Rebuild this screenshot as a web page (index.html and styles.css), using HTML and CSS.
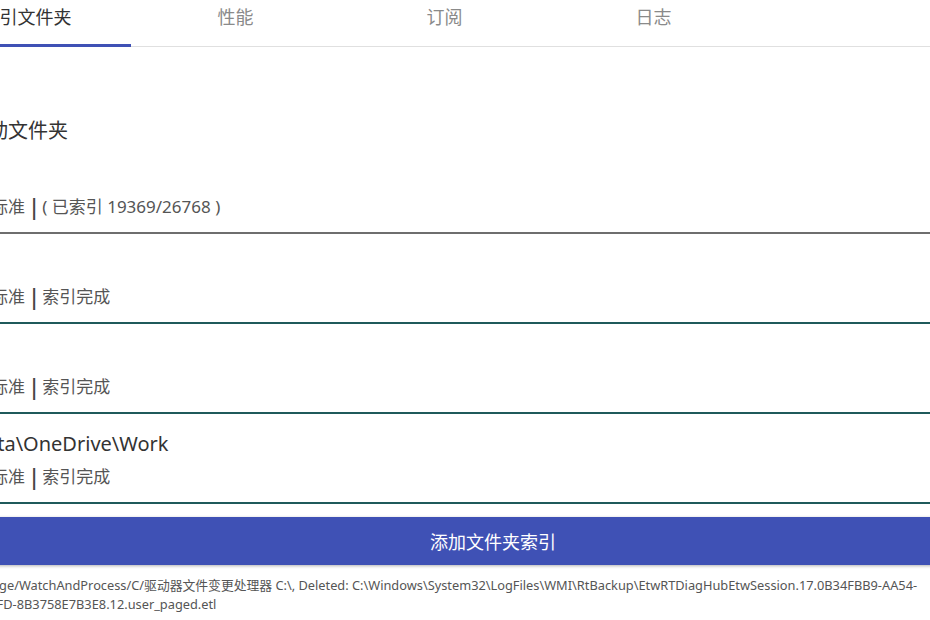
FILE: index.html
```html
<!DOCTYPE html>
<html lang="zh-CN">
<head>
<meta charset="utf-8">
<title>索引文件夹</title>
<link rel="stylesheet" href="styles.css">
</head>
<body>
<div class="page">
  <nav class="tabs">
    <div class="tab active">索引文件夹</div>
    <div class="tab">性能</div>
    <div class="tab">订阅</div>
    <div class="tab">日志</div>
  </nav>
  <main class="content">
    <h2 class="heading">活动文件夹</h2>
    <div class="row first">
      <div class="path">C:\</div>
      <div class="status">模式：标准<span class="sep">|</span>( 已索引 19369/26768 )</div>
    </div>
    <div class="row">
      <div class="path">D:\</div>
      <div class="status">模式：标准<span class="sep">|</span>索引完成</div>
    </div>
    <div class="row">
      <div class="path">E:\</div>
      <div class="status">模式：标准<span class="sep">|</span>索引完成</div>
    </div>
    <div class="row">
      <div class="path">W:\Data\OneDrive\Work</div>
      <div class="status">模式：标准<span class="sep">|</span>索引完成</div>
    </div>
    <button class="add-btn">添加文件夹索引</button>
    <p class="log">FileStorage/WatchAndProcess/C/驱动器文件变更处理器 C:\, Deleted: C:\Windows\System32\LogFiles\WMI\RtBackup\EtwRTDiagHubEtwSession.17.0B34FBB9-AA54-E1C7-B2FD-8B3758E7B3E8.12.user_paged.etl</p>
  </main>
</div>
</body>
</html>
```

FILE: styles.css
```css
html, body {
  margin: 0;
  padding: 0;
  background: #ffffff;
  overflow: hidden;
}

body {
  width: 930px;
  height: 620px;
  font-family: "Noto Sans", "Noto Sans CJK SC", sans-serif;
  color: #333333;
}

.page {
  margin-left: -78px;
  width: 1142px;
}

.tabs {
  display: flex;
  border-bottom: 1px solid #e0e0e0;
}

.tab {
  width: 209px;
  text-align: center;
  font-size: 18px;
  line-height: 24px;
  padding: 4px 0 16px;
  margin-bottom: -1px;
  border-bottom: 3px solid transparent;
  color: #8a8a8a;
  font-family: "Noto Sans CJK SC", sans-serif;
}

.tab.active {
  color: #333333;
  border-bottom-color: #3f51b5;
}

.content {
  display: flex;
  flex-direction: column;
}

.heading {
  margin: 69px 0 0 46px;
  font-size: 20px;
  line-height: 28px;
  font-weight: normal;
  color: #333333;
  font-family: "Noto Sans CJK SC", sans-serif;
}

.row {
  display: flex;
  flex-direction: column;
  gap: 7px;
  padding: 16px 0 13px 18px;
  border-bottom: 2px solid #1f5a5b;
}

.row.first {
  border-bottom-color: #6e6e6e;
}

.path {
  font-size: 20px;
  line-height: 28px;
  color: #333333;
  font-family: "Noto Sans", "Noto Sans CJK SC", sans-serif;
}

.status {
  font-size: 17px;
  line-height: 24px;
  color: #555555;
  font-family: "Noto Sans", "Noto Sans CJK SC", sans-serif;
}

.sep {
  display: inline-block;
  margin: 0 5px 0 6px;
  font-family: "Liberation Sans", sans-serif;
  font-size: 24px;
  line-height: 24px;
  vertical-align: top;
  color: #444444;
}

.add-btn {
  margin-top: 13px;
  height: 48px;
  border: none;
  background: #3f51b5;
  color: #ffffff;
  font-size: 18px;
  font-family: "Noto Sans CJK SC", sans-serif;
  box-shadow: 0 1px 3px rgba(0, 0, 0, 0.3);
  padding: 0;
}

.log {
  margin: 11px 0 0;
  padding-left: 25px;
  padding-right: 134px;
  font-size: 12.8px;
  line-height: 19px;
  color: #555555;
}
```
